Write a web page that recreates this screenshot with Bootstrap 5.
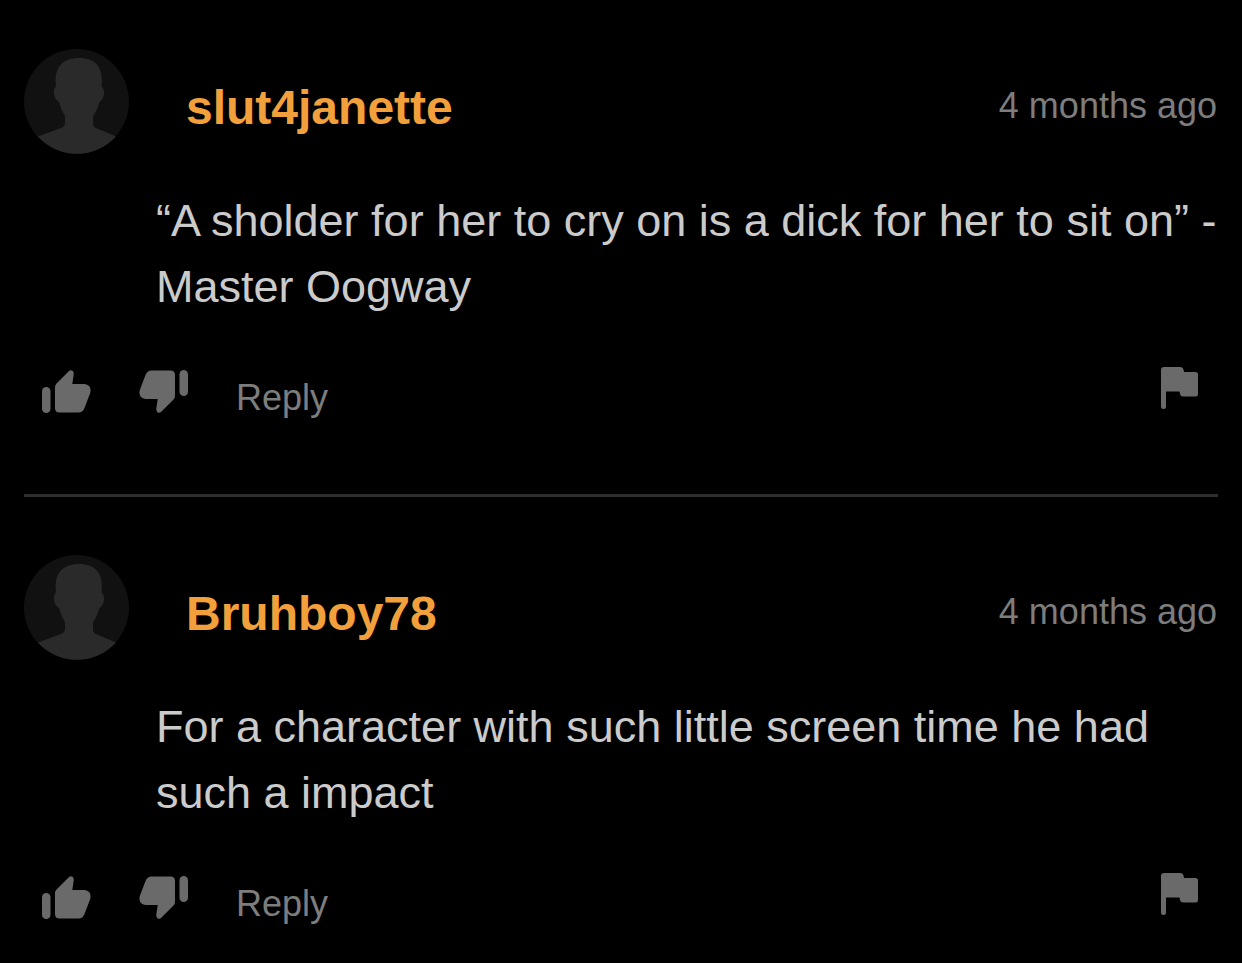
<!DOCTYPE html>
<html lang="en" data-bs-theme="dark">
<head>
<meta charset="utf-8">
<meta name="viewport" content="width=device-width, initial-scale=1">
<title>Comments</title>
<link href="https://cdn.jsdelivr.net/npm/bootstrap@5.3.0/dist/css/bootstrap.min.css" rel="stylesheet">
<style>
  body { background: #000; font-family: "Liberation Sans", Arial, sans-serif; color: #cbcbcb; }
  .comment-list { padding: 0 24px; }
  .comment { padding: 58px 0 72px; border-bottom: 3px solid #2e2d2f; }
  .comment:first-child { padding-top: 49px; }
  .comment:last-child { border-bottom: 0; padding-bottom: 32px; }
  .avatar { width: 105px; height: 105px; }
  .author { margin-left: 57px; padding-top: 12px; font-size: 48px; line-height: 56px; font-weight: 700; color: #f2a03c; }
  .author:hover { color: #ffb55c; }
  .posted { padding: 8px 1px 0 0; font-size: 36px; line-height: 40px; color: #7d7d7d; }
  .comment-text { margin: 34px 0 0 132px; font-size: 45px; line-height: 66px; }
  .actions { margin-top: 47px; padding: 0 19px 0 18px; height: 55px; }
  .actions .btn { --bs-btn-color: #6a6a6a; --bs-btn-hover-color: #9a9a9a; --bs-btn-active-color: #9a9a9a; line-height: 40px; }
  .actions svg { display: block; fill: currentColor; }
  .actions .vote { margin-top: 3px; }
  .actions .reply { --bs-btn-color: #7d7d7d; font-size: 36px; margin-top: 11px; }
</style>
</head>
<body>
<svg class="d-none" aria-hidden="true">
  <symbol id="person" viewBox="0 0 105 105">
    <circle cx="52.500" cy="52.500" r="52.500" fill="#111"/>
    <path fill="#2a2a2a" d="M14 87.500L37 79Q41 77.500 41 74V67Q37 61 35 53Q31 51 30 45Q29.500 40 32 37C30 20 37 9 55 9C73 9 79.500 20 77.500 37Q80.500 40 80 45Q79 51 75.500 53Q73 62 69 67V74Q69 77.500 72 79L92 87.500A52.500 52.500 0 0 1 14 87.500Z"/>
  </symbol>
  <symbol id="thumb" viewBox="0 0 49 43">
    <rect x="0" y="17" width="8.500" height="26" rx="4.250"/>
    <path d="M13 17Q13 15 14.500 13.500L26.500 1.500Q28.500 -.5 30.500 .8Q32 2 31.700 4.500L30.300 14H42.500Q50 15 48.200 23L42.500 38Q40.700 42.500 36.500 42.500H17.500Q13 42.500 13 38Z"/>
  </symbol>
  <symbol id="flag" viewBox="0 0 38 43">
    <path d="M0 3Q0 0 3 0H19.500Q22 0 22.500 2.500L23 5H34.500Q37 5 37 7.500V27Q37 29.500 34.500 29.500H22Q19.500 29.500 19 27L18.500 24.500H5V39.500Q5 42 2.500 42Q0 42 0 39.500Z"/>
  </symbol>
</svg>

<main class="comment-list">
  <article class="comment">
    <header class="d-flex align-items-center">
      <svg class="avatar flex-shrink-0" role="img" aria-label="Avatar"><use href="#person"/></svg>
      <a class="author text-decoration-none" href="#">slut4janette</a>
      <time class="posted ms-auto text-nowrap">4 months ago</time>
    </header>
    <p class="comment-text">“A sholder for her to cry on is a dick for her to sit on” - Master Oogway</p>
    <div class="actions d-flex align-items-start">
      <button type="button" class="btn vote border-0 p-0" aria-label="Like"><svg width="49" height="43"><use href="#thumb"/></svg></button>
      <button type="button" class="btn vote border-0 p-0 ms-5" aria-label="Dislike"><svg width="49" height="43"><use href="#thumb" transform="rotate(180 24.500 21.500)"/></svg></button>
      <button type="button" class="btn reply border-0 p-0 ms-5">Reply</button>
      <button type="button" class="btn border-0 p-0 ms-auto" aria-label="Report"><svg width="38" height="43"><use href="#flag"/></svg></button>
    </div>
  </article>

  <article class="comment">
    <header class="d-flex align-items-center">
      <svg class="avatar flex-shrink-0" role="img" aria-label="Avatar"><use href="#person"/></svg>
      <a class="author text-decoration-none" href="#">Bruhboy78</a>
      <time class="posted ms-auto text-nowrap">4 months ago</time>
    </header>
    <p class="comment-text">For a character with such little screen time he had such a impact</p>
    <div class="actions d-flex align-items-start">
      <button type="button" class="btn vote border-0 p-0" aria-label="Like"><svg width="49" height="43"><use href="#thumb"/></svg></button>
      <button type="button" class="btn vote border-0 p-0 ms-5" aria-label="Dislike"><svg width="49" height="43"><use href="#thumb" transform="rotate(180 24.500 21.500)"/></svg></button>
      <button type="button" class="btn reply border-0 p-0 ms-5">Reply</button>
      <button type="button" class="btn border-0 p-0 ms-auto" aria-label="Report"><svg width="38" height="43"><use href="#flag"/></svg></button>
    </div>
  </article>
</main>
<script src="https://cdn.jsdelivr.net/npm/bootstrap@5.3.0/dist/js/bootstrap.bundle.min.js"></script>
</body>
</html>
